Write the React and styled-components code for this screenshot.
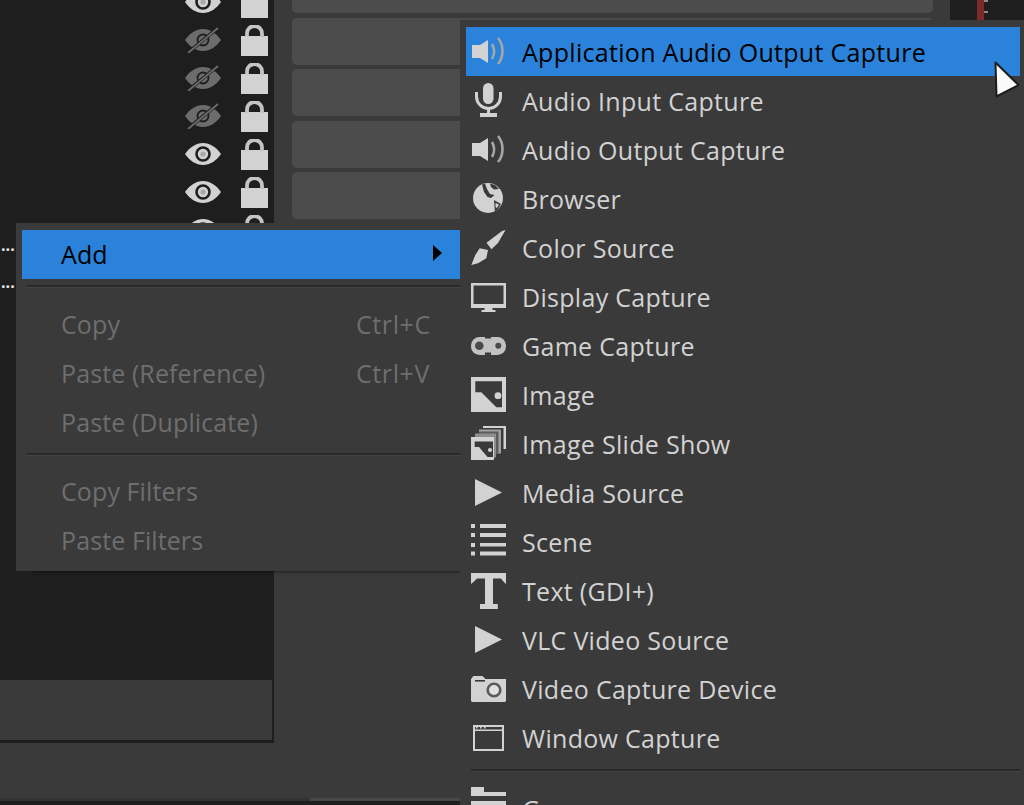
import React from 'react';
import styled, { createGlobalStyle } from 'styled-components';

const GlobalStyle = createGlobalStyle`
  html, body { margin: 0; padding: 0; background: #3a3a3a; }
  body { width: 1024px; height: 805px; overflow: hidden; font-family: "Open Sans", "Noto Sans", sans-serif; }
`;

const LIGHT = '#d2d2d2';
const DARK = '#3a3a3a';

const Page = styled.div`
  position: relative;
  width: 1024px;
  height: 805px;
  overflow: hidden;
  background: ${DARK};
`;

const Main = styled.div`
  display: flex;
  align-items: flex-start;
  height: 798px;
`;

const SourcePanel = styled.div`
  display: flex;
  flex-direction: column;
  flex: none;
  width: 272px;
  height: 740px;
  border-right: 2px solid #1e1e1e;
  border-bottom: 3px solid #1e1e1e;
`;

const SourceList = styled.div`
  flex: none;
  height: 680px;
  background: #1e1e1e;
  overflow: hidden;
`;

const SourceRows = styled.div`
  margin-top: -17px;
`;

const SourceRow = styled.div`
  display: flex;
  align-items: center;
  gap: 20px;
  height: 38px;
  padding-left: 185px;
`;

const SourceFooter = styled.div`
  flex: 1;
  background: ${DARK};
`;

const ElidedName = styled.span`
  position: absolute;
  left: 1px;
  top: ${(p) => p.$top}px;
  color: #e4e4e4;
  font-size: 16px;
  line-height: 20px;
  font-weight: 700;
`;

const ButtonColumn = styled.div`
  display: flex;
  flex-direction: column;
  flex: none;
  gap: 4.33px;
  width: 641px;
  margin-left: 18px;
`;

const ActionButton = styled.div`
  height: ${(p) => (p.$cut ? 13 : 47)}px;
  margin-bottom: ${(p) => (p.$cut ? 0.67 : 0)}px;
  background: #4c4c4c;
  border-radius: ${(p) => (p.$cut ? '0 0 5px 5px' : '5px')};
`;

const MeterPanel = styled.div`
  position: relative;
  flex: none;
  width: 74px;
  height: 20px;
  margin-left: 17px;
  background: #1e1e1e;
`;

const MeterBar = styled.div`
  width: 7px;
  height: 20px;
  margin-left: 27px;
  background: #7c2a2a;
`;

const MeterTick = styled.div`
  position: absolute;
  left: 34px;
  top: ${(p) => p.$top}px;
  width: 4px;
  height: 2px;
  background: #8c8c8c;
`;

const StatusEdge = styled.div`
  display: flex;
  height: 3px;
`;

const StatusEdgeDim = styled.div`
  width: 310px;
  background: #323232;
`;

const StatusEdgeLit = styled.div`
  flex: 1;
  background: #484848;
`;

const StatusBase = styled.div`
  height: 4px;
  background: #1e1e1e;
`;

const Menu = styled.div`
  position: absolute;
  background: ${DARK};
  box-sizing: border-box;
`;

const ContextMenu = styled(Menu)`
  left: 16px;
  top: 223px;
  width: 444px;
  height: 348px;
  padding: 7px 0 0 6px;
  box-shadow: 14px 3px 3px -2px rgba(0, 0, 0, 0.45);
`;

const AddMenu = styled(Menu)`
  left: 460px;
  top: 20px;
  width: 564px;
  height: 785px;
  padding: 7px 4px 0 6px;
  overflow: hidden;
`;

const MenuRow = styled.div`
  display: flex;
  align-items: center;
  height: 49px;
  padding-left: ${(p) => (p.$withIcon ? 4 : 39)}px;
  background: ${(p) => (p.$active ? '#2a82da' : 'transparent')};
  color: ${(p) => (p.$active ? '#000' : p.$disabled ? '#6e6e6e' : LIGHT)};
  font-size: 25px;
  line-height: 32px;
  letter-spacing: 0.3px;
  white-space: nowrap;
`;

const RowLabel = styled.span`
  width: ${(p) => (p.$wide ? '295px' : 'auto')};
  padding-bottom: 2px;
  letter-spacing: 0.1px;
`;

const Shortcut = styled.span`
  padding-bottom: 2px;
  letter-spacing: 0.6px;
`;

const RowIcon = styled.svg`
  flex: none;
  width: 36px;
  height: 37px;
  margin-right: 16px;
  overflow: visible;
`;

const SubArrow = styled.svg`
  position: absolute;
  left: 417px;
  top: 22px;
  width: 9px;
  height: 16px;
`;

const MenuSeparator = styled.div`
  height: 2px;
  margin: ${(p) => p.$margin};
  background: #292929;
  border-bottom: 1px solid #444;
`;

const Cursor = styled.svg`
  position: absolute;
  left: 990px;
  top: 58px;
  width: 34px;
  height: 44px;
`;

const EyeIcon = ({ off }) => {
  const c = off ? '#6c6c6c' : LIGHT;
  const bg = '#1e1e1e';
  return (
    <svg width="36" height="26" viewBox="0 0 36 26">
      <path d="M0 13C5 6 11 2 18 2s13 4 18 11c-5 7-11 11-18 11S5 20 0 13z" fill={c} />
      <circle cx="18" cy="13" r={off ? 5.5 : 6.5} fill="none" stroke={bg} strokeWidth={off ? 1.8 : 2.6} />
      <circle cx="18" cy="13" r="2.6" fill={off ? c : '#a8a8a8'} />
      {off && <path d="M2.500 26 34 0" stroke={bg} strokeWidth="3.500" />}
      {off && <path d="M3 26 33 1" stroke={c} strokeWidth="1.800" />}
    </svg>
  );
};

const LockIcon = () => (
  <svg width="27" height="31" viewBox="0 0 27 31">
    <path d="M0 11h27v20H0z" fill={LIGHT} />
    <path d="M6 12V8.500a7.500 7.500 0 0 1 15 0V12" fill="none" stroke="#c4c4c4" strokeWidth="3.800" />
  </svg>
);

const Speaker = () => (
  <>
    <path d="M2 12h8l8-5v23l-8-5H2z" fill={LIGHT} />
    <path d="M22 11c2.600 4.500 2.600 10.500 0 15" fill="none" stroke="#a6a6a6" strokeWidth="2.600" />
    <path d="M28 5c6 7 6 19 0 26" fill="none" stroke="#a6a6a6" strokeWidth="2.600" />
  </>
);

const Mic = () => (
  <>
    <rect x="13" y="1" width="10.500" height="21" rx="5.200" fill={LIGHT} />
    <path d="M6.500 10v4.500a12 12 0 0 0 24 0V10" fill="none" stroke={LIGHT} strokeWidth="3" />
    <path d="M17 26h3v6h-3zM10 31h17v4H10z" fill={LIGHT} />
  </>
);

const Globe = () => (
  <>
    <circle cx="18" cy="18" r="15" fill={LIGHT} />
    <path d="M12 4.500 15 3.500l2 5.500 3 5 4.500 1-3.500 3-3.500-1-3.500-5z" fill={DARK} />
    <path d="M20 3.500l5 1.500 4 4-5 .5-3-2.500z" fill={DARK} />
    <path d="M24 20l7 4-3 5-3 3-.5-5z" fill={DARK} />
    <path d="M25.500 23l3.500 1.500-2 3.500-1.500-1z" fill={LIGHT} />
  </>
);

const Brush = () => (
  <>
    <path d="M35.500 1 32 2 16.500 13.700l5 6.600 6.500-6.300z" fill={LIGHT} />
    <path d="M9.700 19.300 18 21l-1.700 8.300L8 34.300 1.300 36l4-10z" fill={LIGHT} />
  </>
);

const Display = () => (
  <>
    <path fillRule="evenodd" d="M1 5h35v25H1zM3.500 7.500v18.500h30V7.500z" fill={LIGHT} />
    <path d="M14.500 30h8v2h3v2h-14v-2h3z" fill={LIGHT} />
  </>
);

const Gamepad = () => (
  <>
    <rect x="1" y="10" width="35" height="18" rx="8.500" fill="#c2c2c2" />
    <circle cx="9.300" cy="18.700" r="4.300" fill="#4a4a4a" />
    <circle cx="28.300" cy="18.700" r="3" fill="#4a4a4a" />
    <path d="M15 25.500h6V28h-6zM15 10h6v1.500h-6z" fill={DARK} />
  </>
);

const Picture = () => (
  <>
    <path d="M1 1h35v35H1z" fill={LIGHT} />
    <path d="M5.300 5.300H32v26h-5.700L11.300 16.300h-6z" fill={DARK} />
    <circle cx="28" cy="19.700" r="3.400" fill={LIGHT} />
  </>
);

const SlideShow = () => (
  <>
    <path d="M13 1h23v23H13z" fill={LIGHT} />
    <path d="M13 3h20.500v21H13z" fill={DARK} />
    <path d="M9 4.500h22v24H9z" fill="#a0a0a0" />
    <path d="M9 6.500h19.500v22H9z" fill="#5c5c5c" />
    <path d="M5 8.500h21v24H5z" fill="#8e8e8e" />
    <path d="M1 12h23v23H1z" fill={LIGHT} />
    <path d="M4.700 16.500H23V32h-5.500L9 22H4.700z" fill={DARK} />
    <circle cx="20" cy="25" r="2" fill={LIGHT} />
  </>
);

const Play = () => <path d="M5 5 32 18.500 5 32z" fill={LIGHT} />;

const SceneList = () => (
  <path
    d="M1 1h4v4H1zM10 1h26v4H10zM1 10h4v4H1zM10 10h26v4H10zM1 20h4v4H1zM10 20h26v3.500H10zM1 28.500h4v4H1zM10 28.500h26v4H10z"
    fill={LIGHT}
  />
);

const TextGlyph = () => (
  <path d="M1 1h35v11l-3-3-2-2.500h-8V32h4.800v5H10v-5h5V6.500H7l-3 3-3 2.500z" fill={LIGHT} />
);

const Camera = () => (
  <>
    <path d="M1 9l2.500-3h9l3 3H36v22l-1 1H2l-1-1z" fill={LIGHT} />
    <path d="M5 10h10v1.600H5z" fill={DARK} />
    <circle cx="24" cy="20" r="6.300" fill="#e0e0e0" stroke="#5a5a5a" strokeWidth="2.600" />
  </>
);

const WindowFrame = () => (
  <>
    <path d="M4 7h29v24H4z" fill="none" stroke={LIGHT} strokeWidth="2" />
    <path d="M4 10.500h29v1.500H4z" fill={LIGHT} />
    <path d="M6 7.800h1.600v1.600H6zM10 7.800h1.600v1.600H10zM14 7.800h1.600v1.600H14z" fill={LIGHT} />
  </>
);

const Folder = () => (
  <>
    <path d="M1-3h13v5h22v4H1z" fill={LIGHT} />
    <path d="M1 11h35v18H1z" fill={LIGHT} />
  </>
);

const sources = ['on', 'off', 'off', 'off', 'on', 'on', 'on', 'on'];

const sourceKinds = [
  ['Application Audio Output Capture', Speaker],
  ['Audio Input Capture', Mic],
  ['Audio Output Capture', Speaker],
  ['Browser', Globe],
  ['Color Source', Brush],
  ['Display Capture', Display],
  ['Game Capture', Gamepad],
  ['Image', Picture],
  ['Image Slide Show', SlideShow],
  ['Media Source', Play],
  ['Scene', SceneList],
  ['Text (GDI+)', TextGlyph],
  ['VLC Video Source', Play],
  ['Video Capture Device', Camera],
  ['Window Capture', WindowFrame]
];

const AddMenuRow = ({ label, Icon, active }) => (
  <MenuRow $withIcon $active={active}>
    <RowIcon viewBox="0 0 36 37">
      <Icon />
    </RowIcon>
    <span>{label}</span>
  </MenuRow>
);

const DisabledRow = ({ label, shortcut }) => (
  <MenuRow $disabled>
    <RowLabel $wide>{label}</RowLabel>
    {shortcut && <Shortcut>{shortcut}</Shortcut>}
  </MenuRow>
);

const App = () => {
  return (
    <Page>
      <GlobalStyle />
      <Main>
        <SourcePanel>
          <SourceList>
            <SourceRows>
              {sources.map((state, i) => (
                <SourceRow key={i}>
                  <EyeIcon off={state === 'off'} />
                  <LockIcon />
                </SourceRow>
              ))}
            </SourceRows>
          </SourceList>
          <SourceFooter />
        </SourcePanel>
        <ButtonColumn>
          <ActionButton $cut />
          <ActionButton />
          <ActionButton />
          <ActionButton />
          <ActionButton />
        </ButtonColumn>
        <MeterPanel>
          <MeterBar />
          <MeterTick $top={0} />
          <MeterTick $top={11} />
        </MeterPanel>
      </Main>
      <StatusEdge>
        <StatusEdgeDim />
        <StatusEdgeLit />
      </StatusEdge>
      <StatusBase />

      <ElidedName $top={235}>...</ElidedName>
      <ElidedName $top={272}>...</ElidedName>

      <ContextMenu>
        <MenuRow $active>
          <RowLabel>Add</RowLabel>
          <SubArrow viewBox="0 0 9 16">
            <path d="M0 0 9 8 0 16z" fill="#000" />
          </SubArrow>
        </MenuRow>
        <MenuSeparator $margin="6px 0 12px 5px" />
        <DisabledRow label="Copy" shortcut="Ctrl+C" />
        <DisabledRow label="Paste (Reference)" shortcut="Ctrl+V" />
        <DisabledRow label="Paste (Duplicate)" />
        <MenuSeparator $margin="6px 0 11px 5px" />
        <DisabledRow label="Copy Filters" />
        <DisabledRow label="Paste Filters" />
      </ContextMenu>

      <AddMenu>
        {sourceKinds.map(([label, Icon], i) => (
          <AddMenuRow key={label} label={label} Icon={Icon} active={i === 0} />
        ))}
        <MenuSeparator $margin="7px 0 12px 5px" />
        <AddMenuRow label="Group" Icon={Folder} />
      </AddMenu>

      <Cursor viewBox="0 0 34 44">
        <path d="M5.500 4.500 28.500 27 6.500 38.500z" fill="#fafafa" stroke="#1c1c1c" strokeWidth="2" strokeLinejoin="round" />
      </Cursor>
    </Page>
  );
};

export default App;
